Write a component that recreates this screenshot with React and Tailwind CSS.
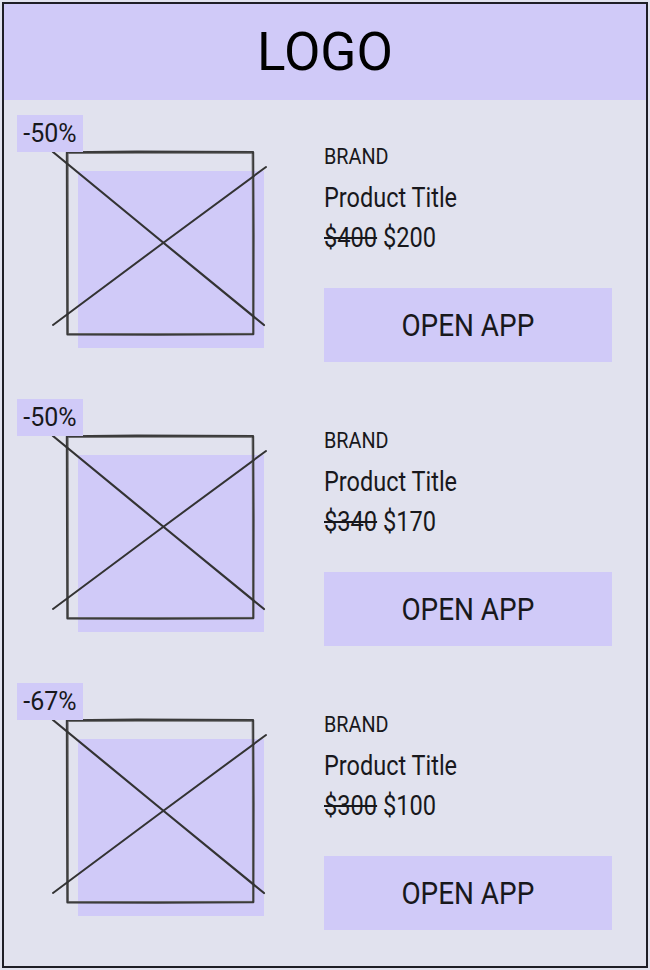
import React from 'react';

const products = [
  { id: 1, discount: '-50%', brand: 'BRAND', title: 'Product Title', oldPrice: '$400', price: '$200' },
  { id: 2, discount: '-50%', brand: 'BRAND', title: 'Product Title', oldPrice: '$340', price: '$170' },
  { id: 3, discount: '-67%', brand: 'BRAND', title: 'Product Title', oldPrice: '$300', price: '$100' },
];

const font = { fontFamily: 'Roboto, "Liberation Sans", Arial, sans-serif' };

function Placeholder() {
  // hand-drawn looking image box with an X through it
  return (
    <svg width="270" height="240" viewBox="0 0 270 240" className="block">
      <rect x="61" y="56" width="186" height="177" fill="#d0caf8" />
      <path d="M50 37.5 L120 36.8 L236 37.2 L236.4 120 L236.2 219 L140 219.6 L50.5 219.3 L50.2 130 Z" fill="none" stroke="#3a3a3a" strokeWidth="2.4" strokeLinejoin="round" />
      <path d="M51 38.5 L235 38.2 M235.3 39 L235.5 218 M235 218.4 L51.5 218.6 M51.4 218 L51.1 39" fill="none" stroke="#6a6a6a" strokeWidth="0.8" />
      <path d="M36 37 L140 122.5 L247 210" fill="none" stroke="#333" strokeWidth="2.2" strokeLinecap="round" />
      <path d="M36 210 L140 132.5 L249 52" fill="none" stroke="#333" strokeWidth="2" strokeLinecap="round" />
    </svg>
  );
}

function ProductRow({ product }) {
  return (
    <div className="flex h-[284px] pt-[11px]">
      <div className="relative w-[320px] pl-[13px]">
        <Placeholder />
        <div className="absolute left-[13px] top-0 flex h-[37px] w-[66px] items-center justify-center bg-[#d0caf8] text-[#18181c]">
          <span className="text-[25px] leading-none">{product.discount}</span>
        </div>
      </div>
      <div className="flex w-[288px] flex-col pt-[28px] text-[#18181c]">
        <div className="h-[28px] origin-left scale-x-[0.9] text-[22px] leading-[28px]">{product.brand}</div>
        <div className="mt-[11px] h-[32px] origin-left scale-x-[0.87] text-[27px] leading-[32px] whitespace-nowrap">{product.title}</div>
        <div className="mt-[8px] h-[32px] origin-left scale-x-[0.875] text-[27px] leading-[32px] whitespace-nowrap">
          <span className="line-through">{product.oldPrice}</span> {product.price}
        </div>
        <button className="mt-[34px] flex h-[74px] w-[288px] items-center justify-center bg-[#d0caf8] text-[#18181c]">
          <span className="inline-block scale-x-[0.9] text-[31px] leading-none">OPEN APP</span>
        </button>
      </div>
    </div>
  );
}

export default function App() {
  return (
    <div className="min-h-screen bg-[#e1e2ee] p-[2px]" style={font}>
      <div className="flex h-[966px] flex-col border-2 border-[#1e1e26]">
        <header className="flex h-[96px] items-center justify-center bg-[#d0caf8] text-black">
          <span className="text-[53px] leading-none">LOGO</span>
        </header>
        <div className="flex flex-col pt-[4px]">
          {products.map(p => (
            <ProductRow key={p.id} product={p} />
          ))}
        </div>
      </div>
    </div>
  );
}
